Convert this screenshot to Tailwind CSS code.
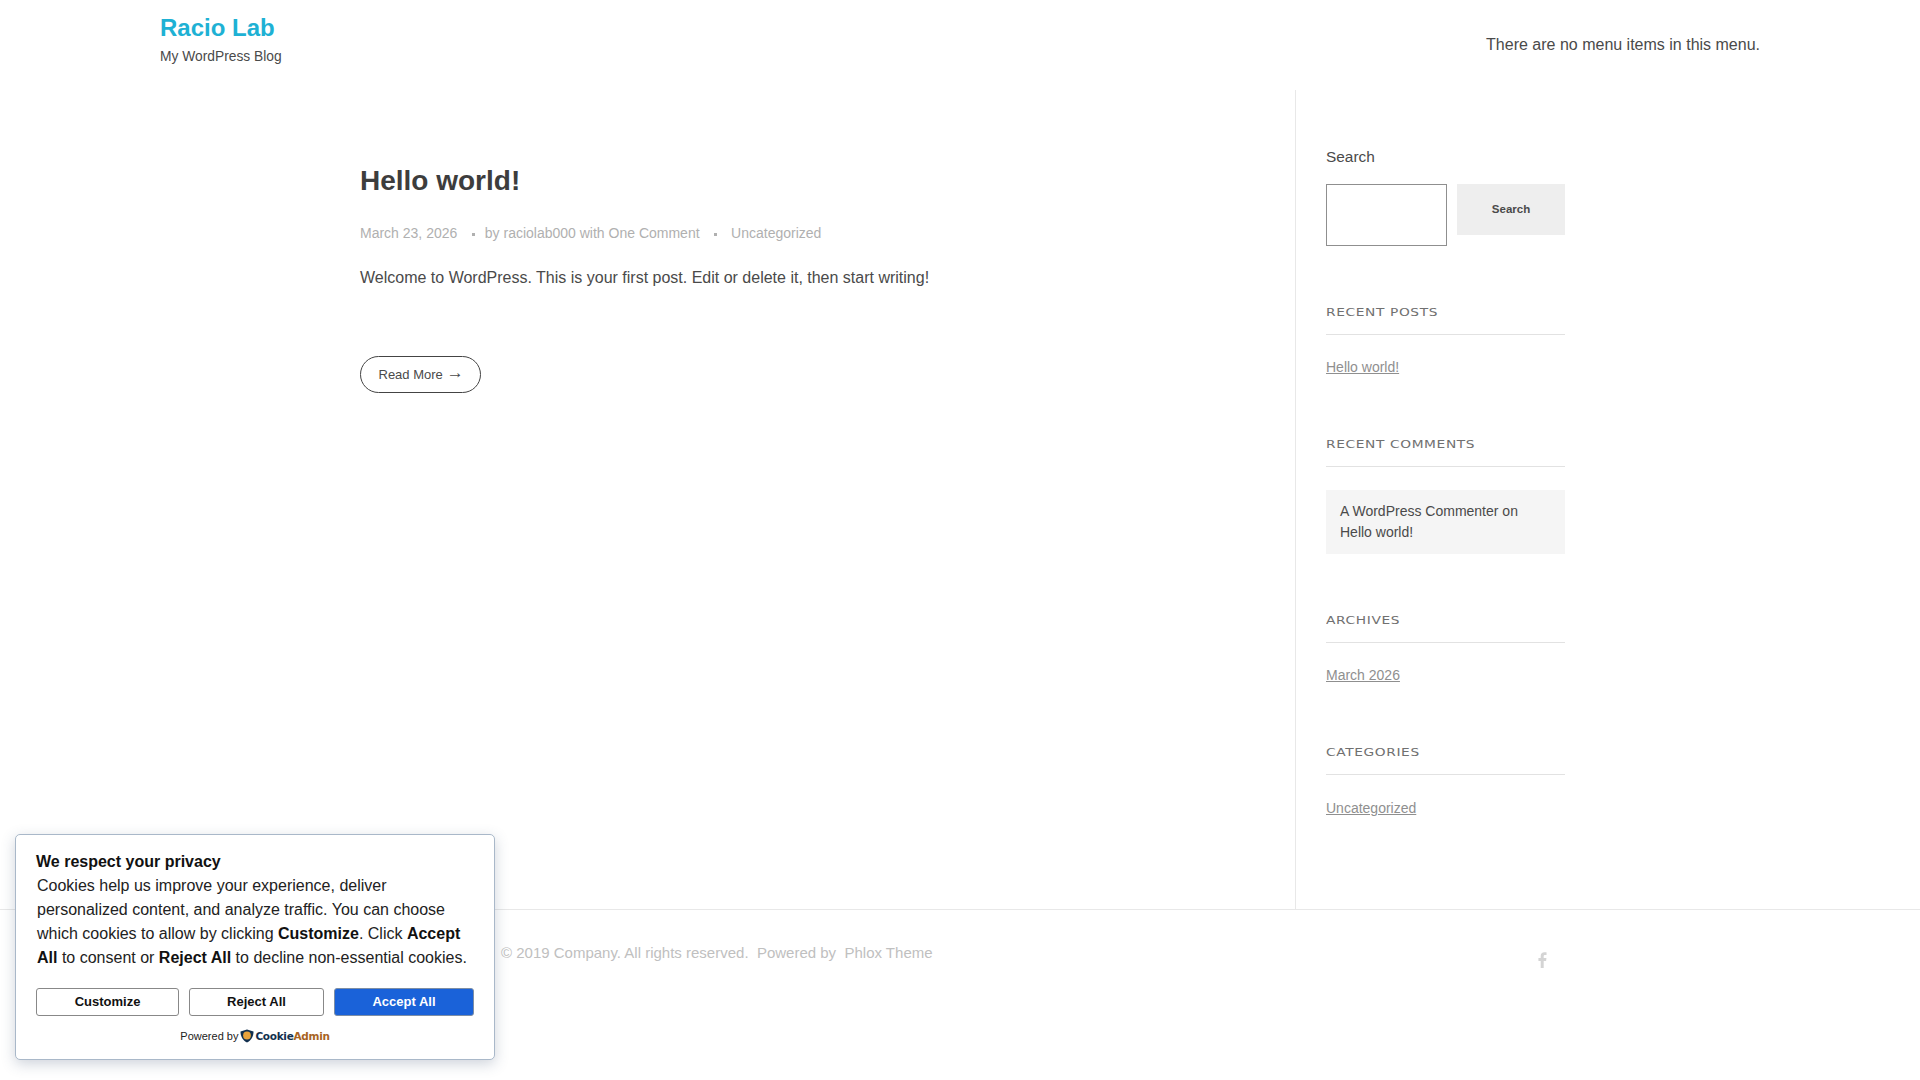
<!DOCTYPE html>
<html lang="en">
<head>
<meta charset="utf-8">
<title>Racio Lab</title>
<script src="https://cdn.jsdelivr.net/npm/@tailwindcss/browser@4"></script>
</head>
<body class="bg-white font-['Liberation_Sans',Arial,sans-serif] text-[#444]">
<div class="relative w-[1920px] h-[1080px] overflow-hidden flex flex-col">
  <header class="h-[90px] flex items-start justify-between pl-[160px] pr-[160px] shrink-0">
    <div class="pt-[14px]">
      <a class="block text-[24px] leading-[28px] font-bold text-[#1eb1d4]">Racio Lab</a>
      <p class="mt-[5px] text-[13.8px] leading-[20px] text-[#4a4a4a]">My WordPress Blog</p>
    </div>
    <p class="pt-[34px] text-[16px] leading-[22px] text-[#4a4a4a]">There are no menu items in this menu.</p>
  </header>

  <div class="flex h-[819px] shrink-0">
    <main class="w-[1295px] pl-[360px] pt-[73px] shrink-0">
      <h1 class="text-[28px] leading-[36px] font-bold text-[#3d3d3d]">Hello world!</h1>
      <div class="mt-[24px] flex items-center text-[14px] leading-[20px] text-[#b0b0b0]">
        <span>March 23, 2026</span>
        <span class="ml-[15px] w-[3px] h-[3px] bg-[#b0b0b0] mt-[3px]"></span>
        <span class="ml-[9.5px]">by raciolab000 with One Comment</span>
        <span class="ml-[14px] w-[3px] h-[3px] bg-[#b0b0b0] mt-[3px]"></span>
        <span class="ml-[14.5px]">Uncategorized</span>
      </div>
      <p class="mt-[23px] text-[16px] leading-[24px] text-[#4a4a4a]">Welcome to WordPress. This is your first post. Edit or delete it, then start writing!</p>
      <a class="mt-[66px] inline-flex items-center h-[37px] pl-[17.5px] pr-[16px] border border-[#444] rounded-[19px] text-[13px] text-[#4a4a4a]">Read More<span class="ml-[4px] -mt-[4px] text-[17px] leading-none">→</span></a>
    </main>
    <aside class="w-[270px] pl-[30px] border-l border-[#e8e8e8] pt-[57px] shrink-0 box-content">
      <h2 class="text-[15.4px] leading-[20px] text-[#4a4a4a]">Search</h2>
      <div class="mt-[17px] flex items-start gap-[10px] w-[239px]">
        <div class="w-[121px] h-[62px] border border-[#8f8f8f] bg-white shrink-0"></div>
        <button class="w-[108px] h-[51px] bg-[#eee] text-[11.5px] font-bold text-[#4a4a4a]">Search</button>
      </div>

      <div class="w-[239px] mt-[59px]">
        <h3 class="font-['DejaVu_Sans',sans-serif] text-[11px] leading-[16px] tracking-[0.5px] uppercase text-[#707070] scale-x-[1.25] origin-left">Recent Posts</h3>
        <div class="mt-[13px] border-t border-[#e2e2e2]"></div>
        <a class="block mt-[22px] text-[14px] leading-[20px] text-[#8f8f8f] underline">Hello world!</a>
      </div>

      <div class="w-[239px] mt-[60px]">
        <h3 class="font-['DejaVu_Sans',sans-serif] text-[11px] leading-[16px] tracking-[0.5px] uppercase text-[#707070] scale-x-[1.25] origin-left">Recent Comments</h3>
        <div class="mt-[13px] border-t border-[#e2e2e2]"></div>
        <div class="mt-[23px] bg-[#f5f5f5] px-[14px] py-[11px] text-[14px] leading-[21px] text-[#4a4a4a] h-[64px]">A WordPress Commenter on Hello world!</div>
      </div>

      <div class="w-[239px] mt-[59px]">
        <h3 class="font-['DejaVu_Sans',sans-serif] text-[11px] leading-[16px] tracking-[0.5px] uppercase text-[#707070] scale-x-[1.25] origin-left">Archives</h3>
        <div class="mt-[13px] border-t border-[#e2e2e2]"></div>
        <a class="block mt-[22px] text-[14px] leading-[20px] text-[#8f8f8f] underline">March 2026</a>
      </div>

      <div class="w-[239px] mt-[60px]">
        <h3 class="font-['DejaVu_Sans',sans-serif] text-[11px] leading-[16px] tracking-[0.5px] uppercase text-[#707070] scale-x-[1.25] origin-left">Categories</h3>
        <div class="mt-[13px] border-t border-[#e2e2e2]"></div>
        <a class="block mt-[23px] text-[14px] leading-[20px] text-[#8f8f8f] underline">Uncategorized</a>
      </div>
    </aside>
  </div>

  <footer class="flex-1 border-t border-[#e8e8e8] flex items-start pl-[501px] pr-[355px] justify-between">
    <p class="pt-[33px] text-[15px] leading-[20px] text-[#c0c0c0] whitespace-pre">© 2019 Company. All rights reserved.  Powered by  <a>Phlox Theme</a></p>
    <svg class="mt-[42px] w-[16px] h-[16px] mr-[14px]" viewBox="0 0 14 14" fill="#d4d4d4"><path d="M5 14V7.8H3V5.3h2V3.6C5 1.4 6.3.3 8.2.3c.9 0 1.7.1 1.9.1v2.2H8.8c-1 0-1.2.5-1.2 1.2v1.5h2.4l-.3 2.5H7.6V14z"/></svg>
  </footer>

  <div class="absolute left-[15px] top-[834px] w-[480px] h-[226px] bg-white border border-[#a9b8c9] rounded-[5px] shadow-[0_4px_14px_rgba(60,80,110,0.25)] pt-[15px] pl-[20px] pr-[20px] text-[#111]">
    <h4 class="text-[16px] leading-[24px] font-bold text-[#111]">We respect your privacy</h4>
    <p class="pl-[1px] text-[16px] leading-[24px] text-[#222] w-[440px]">Cookies help us improve your experience, deliver personalized content, and analyze traffic. You can choose which cookies to allow by clicking <b class="text-[#111]">Customize</b>. Click <b class="text-[#111]">Accept All</b> to consent or <b class="text-[#111]">Reject All</b> to decline non-essential cookies.</p>
    <div class="mt-[18px] flex gap-[10px] text-[13px] font-bold">
      <button class="w-[143px] h-[28px] border border-[#888] rounded-[3px] bg-white text-[#111]">Customize</button>
      <button class="w-[135px] h-[28px] border border-[#888] rounded-[3px] bg-white text-[#111]">Reject All</button>
      <button class="w-[140px] h-[28px] border border-[#7d8ea5] rounded-[3px] bg-[#1a62d9] text-white">Accept All</button>
    </div>
    <div class="mt-[12px] flex items-center justify-center gap-[2px] text-[11px] leading-[16px] text-[#222]">
      <span>Powered by</span>
      <svg class="w-[14px] h-[14px]" viewBox="0 0 14 14"><path d="M7 .5 13.5 2.5C13.5 8 11 11.5 7 13.5 3 11.5.5 8 .5 2.5z" fill="#12304f"/><circle cx="7" cy="6.5" r="3.9" fill="#e8a33c"/></svg>
      <span class="font-['DejaVu_Sans',sans-serif] font-bold text-[10.5px] tracking-[-0.3px] text-[#12304f] -ml-[1px]">Cookie<span class="text-[#a8641f]">Admin</span></span>
    </div>
  </div>
</div>
</body>
</html>
